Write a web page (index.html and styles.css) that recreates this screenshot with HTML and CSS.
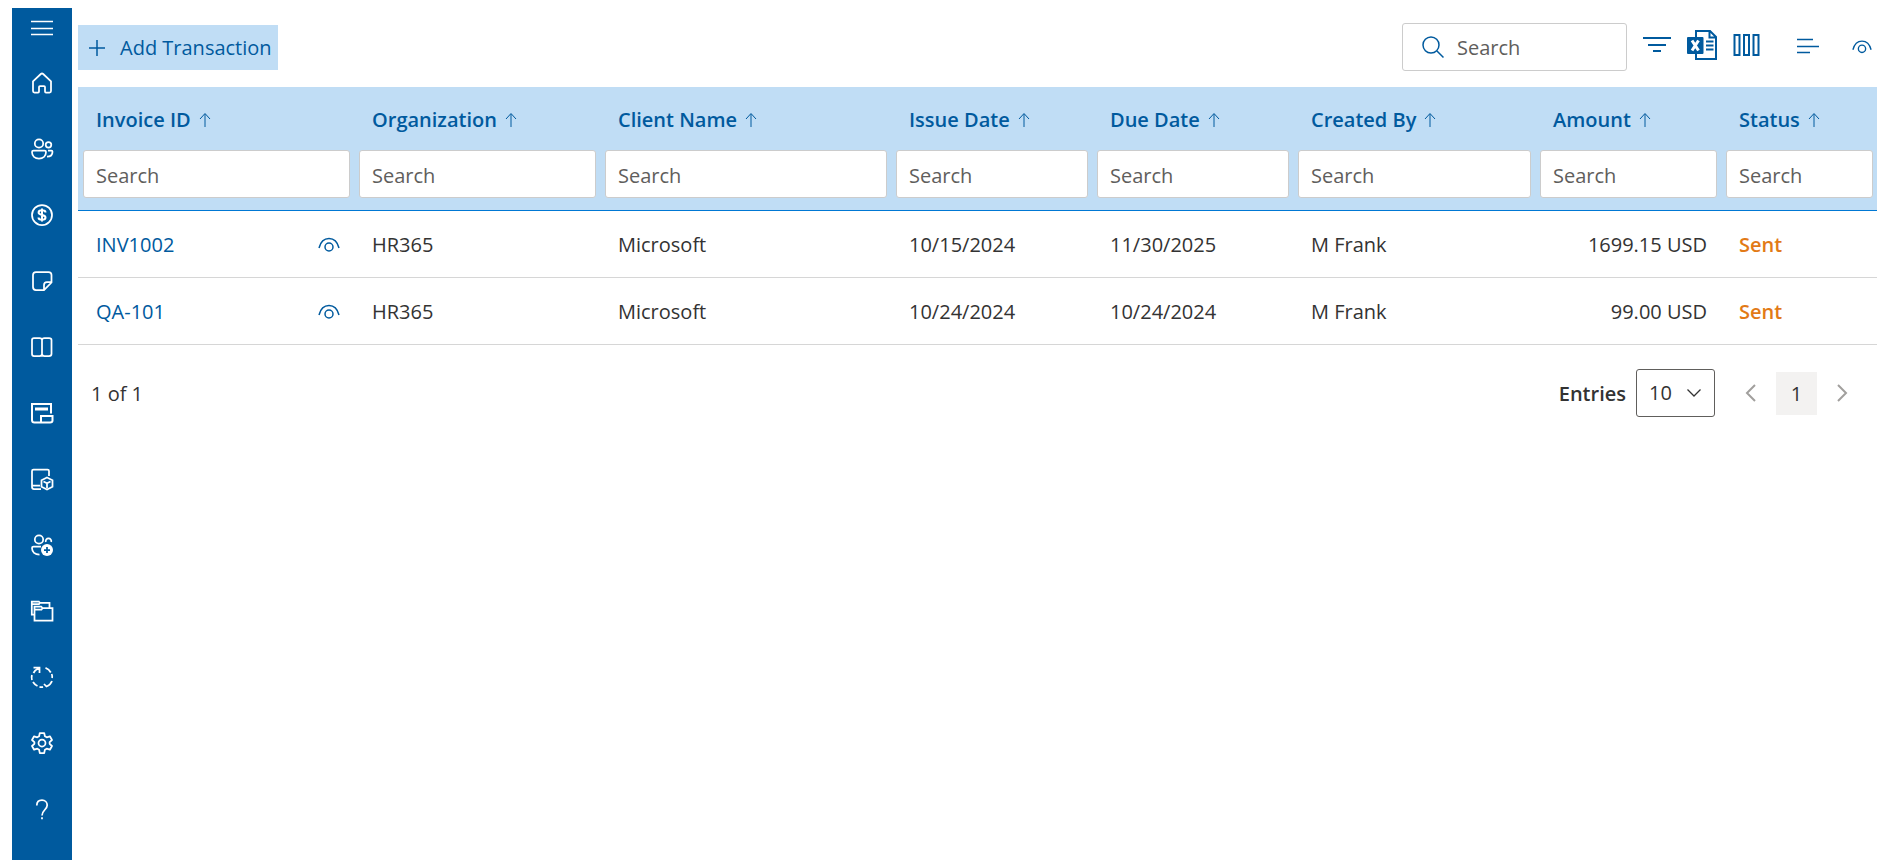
FILE: index.html
```html
<!DOCTYPE html>
<html lang="en">
<head>
<meta charset="utf-8">
<title>Transactions</title>
<meta name="viewport" content="width=device-width, initial-scale=1">
<link rel="stylesheet" href="styles.css">
</head>
<body>
<svg class="defs" aria-hidden="true">
  <symbol id="eye" viewBox="0 0 22 16"><path d="M1 11C2.500 5 6 1.500 11 1.500S19.500 5 21 11"/><circle cx="11" cy="10" r="4"/></symbol>
  <symbol id="arrow-up" viewBox="0 0 12 16"><path d="M6 15V2M1 7l5-5.500L11 7"/></symbol>
</svg>
<div class="app">
  <nav class="sidebar" aria-label="Main">
    <button class="menu" aria-label="Menu"><svg width="24" height="24" viewBox="0 0 24 24"><path d="M1 4.500h22M1 11.500h22M1 17.500h22"/></svg></button>
    <a href="#" aria-label="Home"><svg width="24" height="24" viewBox="0 0 24 24"><path d="M3 10.300 10.800 3q1.200-1 2.400 0L21 10.300V20q0 1.500-1.500 1.500H16q-1 0-1-1V16q0-1-1-1h-4q-1 0-1 1v4.500q0 1-1 1H4.500Q3 21.500 3 20z"/></svg></a>
    <a href="#" aria-label="Clients"><svg width="24" height="24" viewBox="0 0 24 24"><circle cx="9" cy="6.500" r="4.200"/><circle cx="18.500" cy="7.800" r="2.800"/><path d="M3.500 13.500h11q1.500 0 1.500 1.500c0 4-3 6.500-7 6.500s-7-2.500-7-6.500q0-1.500 1.500-1.500zM18 13.500h3.500q1 0 1 1.200c0 3-2 5-5.500 5"/></svg></a>
    <a href="#" aria-label="Billing"><svg width="24" height="24" viewBox="0 0 24 24"><circle cx="12" cy="12" r="10"/><path class="bold" d="M15.500 9.500C15.500 8 14 7.300 12 7.300S8.600 8 8.600 9.600s1.400 2 3.400 2.400 3.500.9 3.500 2.500-1.500 2.300-3.500 2.300-3.500-.8-3.500-2.300M12 5.500v13"/></svg></a>
    <a href="#" aria-label="Notes"><svg width="24" height="24" viewBox="0 0 24 24"><path d="M6 3h12.500q3 0 3 3v7.500L14 21H6q-3 0-3-3V6q0-3 3-3zM21.500 13H17q-3 0-3 3v5"/></svg></a>
    <a href="#" aria-label="Book"><svg width="24" height="24" viewBox="0 0 24 24"><path d="M4 3h5.500Q12 3 12 5v14q0 2-2.500 2H4q-2 0-2-2V5q0-2 2-2zM14.500 3H19q2.500 0 2.500 2v14q0 2-2.500 2h-4.500Q12 21 12 19V5q0-2 2.500-2z"/></svg></a>
    <a href="#" aria-label="Statements"><svg width="24" height="24" viewBox="0 0 24 24"><path class="bold" d="M21 12.500V3H2v16q0 2.500 2.500 2.500H20q2.500 0 2.500-2V15H11v6M6 7.500h11v1H6z"/></svg></a>
    <a href="#" aria-label="Products"><svg width="24" height="24" viewBox="0 0 24 24"><path d="M19 9V4q0-1.500-1.500-1.500h-14Q2 2.500 2 4v16q0 2 2 2h7M2 18.500h8M17 10.500l5.500 2.800v6.500L17 22.500l-5.500-2.700v-6.500zM13.500 14.500l3.500 1.700 3.500-1.700M17 16v5"/></svg></a>
    <a href="#" aria-label="Add client"><svg width="24" height="24" viewBox="0 0 24 24"><circle cx="9" cy="6.500" r="4.200"/><path d="M15.800 9a2.800 2.800 0 1 1 5.400 0M11 13.500H3.500Q2 13.500 2 15c0 4 3 6.500 7.500 6.500"/><circle class="solid" cx="17" cy="17" r="6"/><path class="inverse" d="M17 14v6M14 17h6"/></svg></a>
    <a href="#" aria-label="Folders"><svg width="24" height="24" viewBox="0 0 24 24"><path d="M4.500 15.500H1.800V2.500h7L10 3.800h9.500V8.500M1.800 5H9l1-1.200M4.500 7.500h6.700l1.300 1.500h10v12.500h-18zM4.500 10.500h7l1-1.500"/></svg></a>
    <a href="#" aria-label="Recurring"><svg width="24" height="24" viewBox="0 0 24 24"><path d="M3.500 2.500h6V8M9 3Q5 5 3.500 8M1.900 10q-.6 2.500.1 5M3 17q1.500 2.500 4.500 4M9.500 21.800q2 .5 3.500 0M15.500 2.800Q19 4 20.800 7.500M21.700 9q.8 2 .4 4M14 19l2.500 2.500q4-1.500 5.500-5.500"/></svg></a>
    <a href="#" aria-label="Settings"><svg width="24" height="24" viewBox="0 0 24 24"><path stroke-linejoin="round" d="M9.800 2h4.400l.7 3.300 1.800 1 3.200-1 2.100 3.700-2.400 2.200v1.600l2.400 2.200-2.100 3.700-3.200-1-1.800 1-.7 3.300H9.800l-.7-3.300-1.800-1-3.200 1L2 15l2.400-2.200v-1.600L2 9l2.100-3.700 3.200 1 1.800-1z"/><circle cx="12" cy="12" r="3.500"/></svg></a>
    <a href="#" aria-label="Help"><svg width="24" height="24" viewBox="0 0 24 24"><path d="M6.800 8.500C6.800 5.200 9 3.200 12 3.200s5.200 2 5.200 5c0 4.300-5.200 5-5.200 10.300M12 20.200v2"/></svg></a>
  </nav>
  <main class="content">
    <header class="toolbar">
      <button class="add"><svg width="18" height="18" viewBox="0 0 18 18"><path d="M9 1v16M1 9h16"/></svg>Add Transaction</button>
      <div class="tools">
        <label class="search">
          <svg width="24" height="24" viewBox="0 0 24 24"><circle cx="10" cy="10" r="8"/><path d="M16 16l6.500 6.500"/></svg>
          <input type="search" placeholder="Search" aria-label="Search transactions">
        </label>
        <button class="tool" aria-label="Filter"><svg width="28" height="30" viewBox="0 0 28 30"><path class="bold" d="M0 8h28M5 15h18M10 21h8"/></svg></button>
        <button class="tool" aria-label="Export to Excel"><svg width="30" height="30" viewBox="0 0 30 30"><path class="bold" d="M9 7V1h14l6 6v22H9v-5M22.500 1v6.500H29M19 11.500h7.500M19 15.500h7.500M19 19.500h7.500"/><rect class="fill" x="0" y="7" width="16.500" height="17" rx="1"/><path class="cross" d="M5 10.500l6.500 10M11.500 10.500l-6.500 10"/></svg></button>
        <button class="tool" aria-label="Columns"><svg width="28" height="30" viewBox="0 0 28 30"><path class="bold" d="M1.500 5h5v20h-5zM11 5h5v20h-5zM20.500 5h5v20h-5z"/></svg></button>
        <button class="tool align" aria-label="Align"><svg width="22" height="30" viewBox="0 0 22 30"><path d="M0 8.500h16M0 15.500h22M0 21.500h13"/></svg></button>
        <button class="tool view" aria-label="View"><svg width="20" height="16"><use href="#eye"/></svg></button>
      </div>
    </header>
    <table class="grid">
      <colgroup><col class="w-id"><col class="w-org"><col class="w-client"><col class="w-date"><col class="w-date"><col class="w-creator"><col class="w-amount"><col class="w-status"></colgroup>
      <thead>
        <tr class="heads">
          <th scope="col"><button>Invoice ID<svg width="12" height="16"><use href="#arrow-up"/></svg></button></th>
          <th scope="col"><button>Organization<svg width="12" height="16"><use href="#arrow-up"/></svg></button></th>
          <th scope="col"><button>Client Name<svg width="12" height="16"><use href="#arrow-up"/></svg></button></th>
          <th scope="col"><button>Issue Date<svg width="12" height="16"><use href="#arrow-up"/></svg></button></th>
          <th scope="col"><button>Due Date<svg width="12" height="16"><use href="#arrow-up"/></svg></button></th>
          <th scope="col"><button>Created By<svg width="12" height="16"><use href="#arrow-up"/></svg></button></th>
          <th scope="col"><button>Amount<svg width="12" height="16"><use href="#arrow-up"/></svg></button></th>
          <th scope="col"><button>Status<svg width="12" height="16"><use href="#arrow-up"/></svg></button></th>
        </tr>
        <tr class="filters">
          <td><input type="text" placeholder="Search" aria-label="Invoice ID"></td>
          <td><input type="text" placeholder="Search" aria-label="Organization"></td>
          <td><input type="text" placeholder="Search" aria-label="Client Name"></td>
          <td><input type="text" placeholder="Search" aria-label="Issue Date"></td>
          <td><input type="text" placeholder="Search" aria-label="Due Date"></td>
          <td><input type="text" placeholder="Search" aria-label="Created By"></td>
          <td><input type="text" placeholder="Search" aria-label="Amount"></td>
          <td><input type="text" placeholder="Search" aria-label="Status"></td>
        </tr>
      </thead>
      <tbody>
        <tr>
          <td><div class="invoice"><a href="#">INV1002</a><button aria-label="View INV1002"><svg width="22" height="16"><use href="#eye"/></svg></button></div></td>
          <td>HR365</td><td>Microsoft</td><td>10/15/2024</td><td>11/30/2025</td><td>M Frank</td><td class="amount">1699.15 USD</td><td class="status">Sent</td>
        </tr>
        <tr>
          <td><div class="invoice"><a href="#">QA-101</a><button aria-label="View QA-101"><svg width="22" height="16"><use href="#eye"/></svg></button></div></td>
          <td>HR365</td><td>Microsoft</td><td>10/24/2024</td><td>10/24/2024</td><td>M Frank</td><td class="amount">99.00 USD</td><td class="status">Sent</td>
        </tr>
      </tbody>
    </table>
    <footer class="pager">
      <span>1 of 1</span>
      <div class="paging">
        <label for="entries">Entries</label>
        <div class="select">
          <select id="entries"><option>10</option><option>25</option><option>50</option></select>
          <svg width="14" height="8" viewBox="0 0 14 8"><path d="M.5.5 7 7 13.500.5"/></svg>
        </div>
        <button class="step" aria-label="Previous page"><svg width="12" height="18" viewBox="0 0 12 18"><path d="M10 1 2 9l8 8"/></svg></button>
        <button class="page" aria-current="page">1</button>
        <button class="step" aria-label="Next page"><svg width="12" height="18" viewBox="0 0 12 18"><path d="M2 1l8 8-8 8"/></svg></button>
      </div>
    </footer>
  </main>
</div>
</body>
</html>
```
FILE: styles.css
```css
* { box-sizing: border-box; }
body {
  margin: 0;
  color: #333;
  background: #fff;
  font: 20px/28px "Open Sans", "Noto Sans", sans-serif;
}
button, input, select { font: inherit; color: inherit; }
button { padding: 0; border: 0; background: none; cursor: pointer; }
a { color: #005a9e; text-decoration: none; }
svg { display: block; flex: none; fill: none; stroke: currentColor; stroke-width: 1.5; }
.defs { position: absolute; width: 0; height: 0; }
.bold { stroke-width: 2; }
input::placeholder { color: #605e5c; opacity: 1; }

.app { display: flex; gap: 6px; min-height: 100vh; padding: 8px 13px 0 12px; }

.sidebar { flex: none; width: 60px; color: #fff; background: #005a9e; }
.sidebar a, .menu { display: flex; align-items: center; justify-content: center; width: 100%; height: 66px; color: #fff; }
.sidebar .menu { height: 42px; }
.sidebar a svg { stroke-width: 1.75; }
.solid { fill: #fff; stroke: none; }
.inverse { stroke: #005a9e; }

.content { flex: 1; min-width: 0; }
.toolbar { display: flex; justify-content: space-between; align-items: center; padding: 15px 0 16px; color: #005a9e; }
.add { display: flex; align-items: center; gap: 14px; height: 45px; padding: 2px 6px 0 10px; background: #c0ddf5; }
.tools { display: flex; align-items: center; }
.search { display: flex; align-items: center; gap: 12px; width: 225px; height: 48px; padding: 0 8px 0 18px; margin-right: 16px; border: 1px solid #ccc; border-radius: 3px; }
.search input { flex: 1; min-width: 0; border: 0; padding: 2px 0 0; outline: 0; background: none; }
.tool { display: flex; align-items: center; padding-bottom: 4px; margin-right: 16px; }
.align { margin: 0 33px 0 20px; padding-bottom: 2px; }
.view { margin-right: 5px; padding: 0; }
.fill { fill: #005a9e; stroke: none; }
.cross { stroke: #fff; stroke-width: 3; }

.grid { width: 100%; table-layout: fixed; border-collapse: separate; border-spacing: 0; }
.w-id { width: 276px; }
.w-org { width: 246px; }
.w-client { width: 291px; }
.w-date { width: 201px; }
.w-creator { width: 242px; }
.w-amount { width: 186px; }
.w-status { width: 156px; }
.grid thead { background: #c0ddf5; }
.heads th { height: 63px; padding: 2px 0 0 18px; text-align: left; color: #005a9e; font-weight: 600; }
.heads button { display: flex; align-items: center; gap: 8px; font-weight: 600; }
.heads svg { stroke-width: 1; }
.filters td { padding: 0 4px 12px 5px; border-bottom: 1px solid #0078d4; }
.filters input { display: block; width: 100%; height: 48px; padding: 2px 12px 0; border: 1px solid #ccc; border-radius: 3px; background: #fff; }
.grid tbody td { height: 67px; padding: 2px 14px 0 18px; border-bottom: 1px solid #d6d6d6; }
.invoice { display: flex; align-items: center; justify-content: space-between; }
.invoice button { color: #005a9e; }
.grid tbody .amount { text-align: right; }
.grid tbody .status { color: #e27a16; font-weight: 600; }

.pager { display: flex; align-items: center; justify-content: space-between; padding: 24px 29px 0 13px; }
.pager > span, .paging label { padding-top: 2px; }
.paging { display: flex; align-items: center; }
.paging label { font-weight: 600; margin-right: 10px; }
.select { position: relative; width: 79px; margin-right: 30px; }
.select select { display: block; appearance: none; width: 100%; height: 48px; padding: 0 12px; border: 1px solid #605e5c; border-radius: 3px; background: #fff; }
.select svg { position: absolute; right: 14px; top: 20px; stroke-width: 1.25; pointer-events: none; }
.step { color: #a19f9d; }
.step svg { stroke-width: 2; }
.page { width: 41px; height: 43px; padding-top: 2px; margin: 0 19px; background: #f3f2f1; }
```
